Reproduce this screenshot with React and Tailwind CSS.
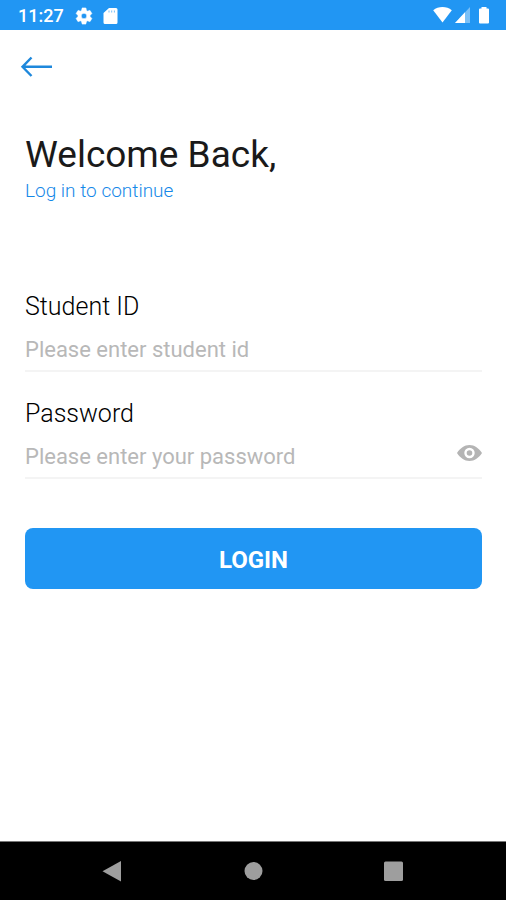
import React, { useState } from 'react';

const StatusBar = () => (
  <div className="flex h-[30px] items-center bg-[#2196f3] pt-px pl-[18px] pr-4 text-white">
    <span className="text-lg leading-7 font-medium">11:27</span>
    <svg className="ml-2.5 h-5 w-5" viewBox="0 0 24 24" fill="currentColor" aria-hidden="true">
      <path d="M19.14 12.94c.04-.3.06-.61.06-.94 0-.32-.02-.64-.07-.94l2.03-1.58a.49.49 0 0 0 .12-.61l-1.92-3.32a.488.488 0 0 0-.59-.22l-2.39.96c-.5-.38-1.03-.7-1.62-.94l-.36-2.54a.484.484 0 0 0-.48-.41h-3.84c-.24 0-.43.17-.47.41l-.36 2.54c-.59.24-1.13.57-1.62.94l-2.39-.96c-.22-.08-.47 0-.59.22L2.74 8.87c-.12.21-.08.47.12.61l2.03 1.58c-.05.3-.09.63-.09.94s.02.64.07.94l-2.03 1.58a.49.49 0 0 0-.12.61l1.92 3.32c.12.22.37.29.59.22l2.39-.96c.5.38 1.03.7 1.62.94l.36 2.54c.05.24.24.41.48.41h3.84c.24 0 .44-.17.47-.41l.36-2.54c.59-.24 1.13-.56 1.62-.94l2.39.96c.22.08.47 0 .59-.22l1.92-3.32c.12-.22.07-.47-.12-.61l-2.01-1.58zM12 15.400a3.400 3.400 0 1 1 0-6.800 3.400 3.400 0 0 1 0 6.800z" stroke="currentColor" strokeWidth=".8" />
    </svg>
    <svg className="ml-2 h-[18px] w-[18px]" viewBox="0 0 18 18" fill="currentColor" aria-hidden="true">
      <path d="M7 1h7a1.500 1.500 0 0 1 1.500 1.500v13A1.500 1.500 0 0 1 14 17H3a1.500 1.500 0 0 1-1.500-1.500V6z" />
      <path d="M7 3.500v2M9.700 3.500v2M12.400 3.500v2" stroke="#2196f3" opacity=".6" />
    </svg>
    <div className="ml-auto flex items-center gap-0.5">
      <svg className="h-[18px] w-5" viewBox="0 0 20 18" fill="currentColor" aria-hidden="true">
        <path d="M10.500 15.500 1.200 3.200C3.800 1 7 0 10.500 0s6.700 1 9.300 3.200z" />
      </svg>
      <svg className="h-[18px] w-4" viewBox="0 0 16 18" fill="currentColor" aria-hidden="true">
        <path d="M1 16 16 0v16z" opacity=".4" />
        <path d="M1 16 11 5.300V16z" />
      </svg>
      <svg className="ml-1.5 h-[18px] w-3" viewBox="0 0 12 18" fill="currentColor" aria-hidden="true">
        <path d="M3.500 0h5v1.500H10a1 1 0 0 1 1 1V15.500a1 1 0 0 1-1 1H2a1 1 0 0 1-1-1V2.500a1 1 0 0 1 1-1h1.500z" />
      </svg>
    </div>
  </div>
);

const NavigationBar = () => (
  <nav className="flex h-[59px] items-center justify-center gap-28 border-t border-[#777] bg-black text-[#9e9e9e]">
    <button type="button" aria-label="Back">
      <svg className="h-7 w-7" viewBox="0 0 28 28" fill="currentColor">
        <path d="M22 4v20.500L3.500 14.300z" />
      </svg>
    </button>
    <button type="button" aria-label="Home">
      <svg className="h-7 w-7" viewBox="0 0 28 28" fill="currentColor">
        <circle cx="14.500" cy="14" r="9" />
      </svg>
    </button>
    <button type="button" aria-label="Recent apps">
      <svg className="h-7 w-7" viewBox="0 0 28 28" fill="currentColor">
        <rect x="5" y="4.500" width="19" height="19.500" rx="1.500" />
      </svg>
    </button>
  </nav>
);

const App = () => {
  const [studentId, setStudentId] = useState('');
  const [password, setPassword] = useState('');
  const [showPassword, setShowPassword] = useState(false);

  const handleSubmit = (e) => {
    e.preventDefault();
  };

  return (
    <div className="flex min-h-screen flex-col bg-white font-[Roboto,sans-serif]">
      <StatusBar />

      <main className="flex-1 px-6">
        <button type="button" aria-label="Go back" className="mt-6 -ml-1 block text-[#1e88dc]">
          <svg className="h-6 w-8" viewBox="0 0 32 24" fill="none" stroke="currentColor" strokeWidth="2.400">
            <path d="M11.500 3.500 2.500 12.800l9 9.200M2.500 12.800H32" />
          </svg>
        </button>

        <div className="mt-[53px] pl-px">
          <h1 className="text-[37px] leading-12 font-normal text-[#1a1a1a]">Welcome Back,</h1>
          <p className="text-[19px] leading-6 font-light text-[#1588e8]">Log in to continue</p>
        </div>

        {/* Login form */}
        <form onSubmit={handleSubmit} className="mt-[88px] pl-px">
          <div className="border-b-2 border-[#f4f4f4]">
            <label htmlFor="studentId" className="block text-[25px] leading-8 font-light text-black">
              Student ID
            </label>
            <input
              id="studentId"
              type="text"
              value={studentId}
              onChange={(e) => setStudentId(e.target.value)}
              placeholder="Please enter student id"
              className="mt-[7px] block h-10 w-full pb-0.5 text-[22px] font-normal text-black outline-none placeholder:text-[#b8b8b8]"
            />
          </div>

          <div className="mt-[26px] border-b-2 border-[#f4f4f4]">
            <label htmlFor="password" className="block text-[25px] leading-8 font-light text-black">
              Password
            </label>
            <div className="mt-[7px] flex">
              <input
                id="password"
                type={showPassword ? 'text' : 'password'}
                value={password}
                onChange={(e) => setPassword(e.target.value)}
                placeholder="Please enter your password"
                className="block h-10 min-w-0 flex-1 pb-0.5 text-[22px] font-normal text-black outline-none placeholder:text-[#b8b8b8]"
              />
              <button
                type="button"
                aria-label="Show password"
                onClick={() => setShowPassword(!showPassword)}
                className="pb-2 text-[#b4b4b4]"
              >
                <svg className="h-[26px] w-[26px]" viewBox="0 0 26 26" fill="currentColor">
                  <path d="M13.500 5C8.500 5 4 8.300 1 13c3 4.700 7.500 8 12.500 8s9.500-3.300 12.500-8c-3-4.700-7.500-8-12.500-8zm0 13.200a5.200 5.200 0 1 1 0-10.400 5.200 5.200 0 0 1 0 10.400zm0-8a2.800 2.800 0 1 0 0 5.600 2.800 2.800 0 0 0 0-5.600z" />
                </svg>
              </button>
            </div>
          </div>

          <button
            type="submit"
            className="mt-[49px] block h-[61px] w-full rounded-lg bg-[#2196f3] pt-0.5 text-2xl font-bold text-white"
          >
            LOGIN
          </button>
        </form>
      </main>

      <NavigationBar />
    </div>
  );
};

export default App;
